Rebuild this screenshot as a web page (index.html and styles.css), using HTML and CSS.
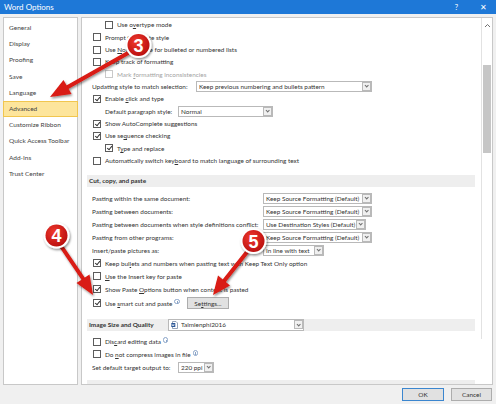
FILE: index.html
```html
<!DOCTYPE html>
<html>
<head>
<meta charset="utf-8">
<title>Word Options</title>
<link rel="stylesheet" href="styles.css">
</head>
<body>
<div class="window">
  <div class="titlebar">
    <span class="title">Word Options</span>
    <span class="tb-btn help">?</span>
    <span class="tb-btn close">✕</span>
  </div>
  <div class="main">
    <nav class="sidebar">
      <div class="nav">General</div>
      <div class="nav">Display</div>
      <div class="nav">Proofing</div>
      <div class="nav">Save</div>
      <div class="nav">Language</div>
      <div class="nav active">Advanced</div>
      <div class="nav">Customize Ribbon</div>
      <div class="nav">Quick Access Toolbar</div>
      <div class="nav">Add-Ins</div>
      <div class="nav">Trust Center</div>
    </nav>
    <section class="content">
      <div class="scroll">
        <div class="group ga">
          <div class="row l1"><span class="cb"></span><span>Use o<u>v</u>ertype mode</span></div>
          <div class="row"><span class="cb"></span><span>Prompt to update style</span></div>
          <div class="row"><span class="cb"></span><span>Use <u>N</u>ormal style for bulleted or numbered lists</span></div>
          <div class="row"><span class="cb"></span><span>Keep track of formatting</span></div>
          <div class="row l1 disabled"><span class="cb"></span><span>Mark <u>f</u>ormatting inconsistencies</span></div>
          <div class="row lab"><span class="lbl w-upd"><u>U</u>pdating style to match selection:</span><span class="sel" style="width:176px"><span class="val">Keep previous numbering and bullets pattern</span><span class="arr"></span></span></div>
          <div class="row"><span class="cb on"></span><span>Enable <u>c</u>lick and type</span></div>
          <div class="row lab l1"><span class="lbl w-par">Default paragraph st<u>y</u>le:</span><span class="sel" style="width:95px"><span class="val">Normal</span><span class="arr"></span></span></div>
          <div class="row"><span class="cb on"></span><span>Show AutoComplete suggestions</span></div>
          <div class="row"><span class="cb on"></span><span>Use se<u>q</u>uence checking</span></div>
          <div class="row l1"><span class="cb on"></span><span>T<u>y</u>pe and replace</span></div>
          <div class="row"><span class="cb"></span><span>Automatically switch key<u>b</u>oard to match language of surrounding text</span></div>
        </div>

        <div class="head h1">Cut, copy, and paste</div>

        <div class="group gb">
          <div class="row lab"><span class="lbl w-paste">Pasting <u>w</u>ithin the same document:</span><span class="sel" style="width:109px"><span class="val">Keep Source Formatting (Default)</span><span class="arr"></span></span></div>
          <div class="row lab"><span class="lbl w-paste">Pasting <u>b</u>etween documents:</span><span class="sel" style="width:109px"><span class="val">Keep Source Formatting (Default)</span><span class="arr"></span></span></div>
          <div class="row lab"><span class="lbl w-paste">Pasting b<u>e</u>tween documents when style definitions conflict:</span><span class="sel" style="width:103px"><span class="val">Use Destination Styles (Default)</span><span class="arr"></span></span></div>
          <div class="row lab"><span class="lbl w-paste">Pasting <u>f</u>rom other programs:</span><span class="sel" style="width:109px"><span class="val">Keep Source Formatting (Default)</span><span class="arr"></span></span></div>
          <div class="row lab"><span class="lbl w-paste"><u>I</u>nsert/paste pictures as:</span><span class="sel" style="width:61px"><span class="val">In line with text</span><span class="arr"></span></span></div>
          <div class="row"><span class="cb on"></span><span>Keep bul<u>l</u>ets and numbers when pasting text with Keep Text Only option</span></div>
          <div class="row"><span class="cb"></span><span><u>U</u>se the Insert key for paste</span></div>
          <div class="row"><span class="cb on"></span><span>Show Paste <u>O</u>ptions button when content is pasted</span></div>
        </div>
        <div class="row smart"><span class="cb on"></span><span>Use <u>s</u>mart cut and paste</span><span class="info"></span><span class="btn">Se<u>t</u>tings...</span></div>

        <div class="head h2"><span class="head-t">Image Size and Quality</span><span class="sel doc" style="width:136px"><span class="docicon"><svg width="7" height="8" viewBox="0 0 7 8"><path d="M1.5 0.5h3.5l1.5 1.5v5.5h-5z" fill="#fff" stroke="#7a8da8" stroke-width="0.8"/><rect x="0.3" y="2" width="4" height="4" fill="#2b5797"/><path d="M1 3l.6 2 .5-1.4.5 1.4.6-2" stroke="#fff" stroke-width="0.5" fill="none"/></svg></span><span class="val">Taimienphi2016</span><span class="arr"></span></span></div>

        <div class="group gc">
          <div class="row"><span class="cb"></span><span>Dis<u>c</u>ard editing data</span><span class="info"></span></div>
          <div class="row"><span class="cb"></span><span>Do <u>n</u>ot compress images in file</span><span class="info"></span></div>
          <div class="row lab"><span class="lbl w-set">Set default target out<u>p</u>ut to:</span><span class="sel" style="width:36px"><span class="val">220 ppi</span><span class="arr"></span></span></div>
        </div>

        <div class="head h3">Show document content</div>
      </div>
      <div class="scrollbar">
        <span class="sb-up"><svg width="7" height="5" viewBox="0 0 7 5"><path d="M1 4L3.5 1.5 6 4" stroke="#606060" stroke-width="0.9" fill="none"/></svg></span>
        <span class="thumb"></span>
      </div>
    </section>
  </div>
  <div class="footer">
    <span class="fbtn ok">OK</span>
    <span class="fbtn">Cancel</span>
  </div>

  <svg class="annot" width="496" height="404" viewBox="0 0 496 404">
    <defs>
      <radialGradient id="bg" cx="40%" cy="35%" r="70%">
        <stop offset="0" stop-color="#f03a2e"/>
        <stop offset="1" stop-color="#b80d0d"/>
      </radialGradient>
      <filter id="sh" x="-30%" y="-30%" width="160%" height="160%">
        <feDropShadow dx="1" dy="1.5" stdDeviation="1.2" flood-color="#000" flood-opacity="0.45"/>
      </filter>
    </defs>
    <g filter="url(#sh)">
      <line x1="128" y1="53" x2="66" y2="88" stroke="#d91a12" stroke-width="4" stroke-linecap="round"/>
      <polygon points="50,97 71.5,94 63.5,80" fill="#d91a12"/>
      <line x1="61" y1="246" x2="84" y2="280" stroke="#d91a12" stroke-width="4" stroke-linecap="round"/>
      <polygon points="93,295 89.5,274.5 76.5,283" fill="#d91a12"/>
      <line x1="247" y1="252" x2="224" y2="281" stroke="#d91a12" stroke-width="4" stroke-linecap="round"/>
      <polygon points="213,295 230,285.5 218,275.5" fill="#d91a12"/>
    </g>
    <g filter="url(#sh)">
      <circle cx="138.5" cy="45" r="13" fill="#fff"/>
      <circle cx="138.5" cy="45" r="11" fill="url(#bg)"/>
      <circle cx="56.5" cy="235.5" r="13" fill="#fff"/>
      <circle cx="56.5" cy="235.5" r="11" fill="url(#bg)"/>
      <circle cx="253.5" cy="241" r="13" fill="#fff"/>
      <circle cx="253.5" cy="241" r="11" fill="url(#bg)"/>
    </g>
    <text class="badge-n" x="138.5" y="51.5">3</text>
    <text class="badge-n" x="56.5" y="242">4</text>
    <text class="badge-n" x="253.5" y="247.5">5</text>
  </svg>
</div>
</body>
</html>
```

FILE: styles.css
```css
* { box-sizing: border-box; }
body {
  margin: 0;
  font-family: "Lato", "Liberation Sans", sans-serif;
  color: #333;
}
.window {
  position: relative;
  width: 496px;
  height: 404px;
  display: flex;
  flex-direction: column;
  background: #f0f0f0;
  overflow: hidden;
}
.titlebar {
  height: 14px;
  flex: none;
  background: #1e78d7;
  color: #fff;
  display: flex;
  align-items: center;
  padding: 0 9px 0 4px;
  font-size: 8px;
}
.title { flex: 1; }
.tb-btn { font-size: 7.5px; }
.help { margin-right: 22px; }

.main {
  flex: 1;
  display: flex;
  gap: 3px;
  padding: 3px 3px 0 3px;
  min-height: 0;
}
.sidebar {
  width: 75px;
  flex: none;
  background: #fff;
  border: 1px solid #c8c8c8;
  padding-top: 2px;
  font-size: 6.5px;
}
.nav {
  height: 16.2px;
  line-height: 16.2px;
  padding-left: 5px;
  color: #444;
  white-space: nowrap;
}
.nav.active {
  background: #fde59c;
  box-shadow: inset 0 0 0 1px #f1c64f;
  margin: 0 -1px;
  padding-left: 6px;
}

.content {
  flex: 1;
  display: flex;
  background: #fff;
  border: 1px solid #c8c8c8;
  min-width: 0;
}
.scroll {
  flex: 1;
  overflow: hidden;
  font-size: 6.4px;
  padding-top: 0.8px;
  min-width: 0;
}
.scrollbar {
  width: 11px;
  flex: none;
  border-left: 1px solid #e2e2e2;
  display: flex;
  flex-direction: column;
  align-items: center;
  height: 321px;
}
.sb-up {
  height: 12px;
  display: flex;
  align-items: center;
  margin-top: 1px;
}
.thumb {
  margin-top: 34px;
  width: 8px;
  height: 88px;
  background: #c6c6c6;
}

.row {
  display: flex;
  align-items: center;
  white-space: nowrap;
  padding-left: 11px;
}
.row.l1 { padding-left: 23px; }
.row.lab { padding-left: 10px; }
.row.lab.l1 { padding-left: 23px; }
.ga .row { height: 12.33px; }
.gb { margin-top: 4.8px; }
.gb .row { height: 13px; }
.gc { margin-top: 4.3px; }
.gc .row { height: 12.8px; }
.row.smart { height: 14px; margin-top: 0.5px; }

.cb {
  width: 8px;
  height: 8px;
  border: 1px solid #5c5c5c;
  background: #fff;
  margin-right: 4px;
  flex: none;
  position: relative;
}
.cb.on::after {
  content: "";
  position: absolute;
  left: 1.8px;
  top: 0.2px;
  width: 2.2px;
  height: 4.2px;
  border: solid #333;
  border-width: 0 1px 1px 0;
  transform: rotate(40deg);
}
.disabled { color: #a3a3a3; }
.disabled .cb { border-color: #c9c9c9; }
u { text-decoration-thickness: 0.5px; text-underline-offset: 1px; }

.lbl { flex: none; overflow: hidden; }
.w-upd { width: 104px; }
.w-par { width: 73px; }
.w-paste { width: 171px; }
.w-set { width: 86px; }

.sel {
  height: 11px;
  border: 1px solid #b9b9b9;
  background: #fff;
  display: flex;
  align-items: center;
  padding-left: 2px;
  flex: none;
  overflow: hidden;
}
.sel .val { flex: 1; overflow: hidden; }
.arr {
  width: 9px;
  height: 9px;
  border: 1px solid #b9b9b9;
  background: #f0f0f0;
  flex: none;
  position: relative;
}
.arr::after {
  content: "";
  position: absolute;
  left: 2.4px;
  top: 1.4px;
  width: 2.4px;
  height: 2.4px;
  border: solid #707070;
  border-width: 0 0.8px 0.8px 0;
  transform: rotate(45deg);
}

.info {
  width: 5.5px;
  height: 5.5px;
  border: 0.7px solid #8aa4c8;
  border-radius: 50%;
  margin-left: 2px;
  margin-top: -3px;
  position: relative;
  flex: none;
}
.info::after {
  content: "";
  position: absolute;
  left: 1.7px;
  top: 1.2px;
  width: 0.7px;
  height: 2.4px;
  background: #8aa4c8;
}
.btn {
  margin-left: 7px;
  width: 42px;
  height: 12px;
  border: 1px solid #adadad;
  background: #e1e1e1;
  display: flex;
  align-items: center;
  justify-content: center;
}

.head {
  height: 12px;
  margin: 0 6px 0 5px;
  background: #eeeeee;
  font-weight: bold;
  display: flex;
  align-items: center;
  padding-left: 2px;
  white-space: nowrap;
}
.h1 { margin-top: 8.2px; }
.h2 { margin-top: 8.7px; }
.h3 { margin-top: 6.3px; }
.head-t { width: 79px; flex: none; }
.sel.doc { height: 12px; font-weight: normal; }
.docicon { display: flex; margin-right: 3px; }

.footer {
  height: 19px;
  flex: none;
  display: flex;
  justify-content: flex-end;
  align-items: center;
  gap: 7px;
  padding-right: 4px;
  font-size: 6.4px;
}
.fbtn {
  width: 41px;
  height: 13px;
  background: #e1e1e1;
  border: 1px solid #adadad;
  display: flex;
  align-items: center;
  justify-content: center;
}
.fbtn.ok { border-color: #3b86cf; width: 42px; }

.annot {
  position: absolute;
  left: 0;
  top: 0;
  pointer-events: none;
}
.badge-n {
  font-family: "Liberation Sans", sans-serif;
  font-weight: bold;
  font-size: 18px;
  fill: #fff;
  text-anchor: middle;
}
```
